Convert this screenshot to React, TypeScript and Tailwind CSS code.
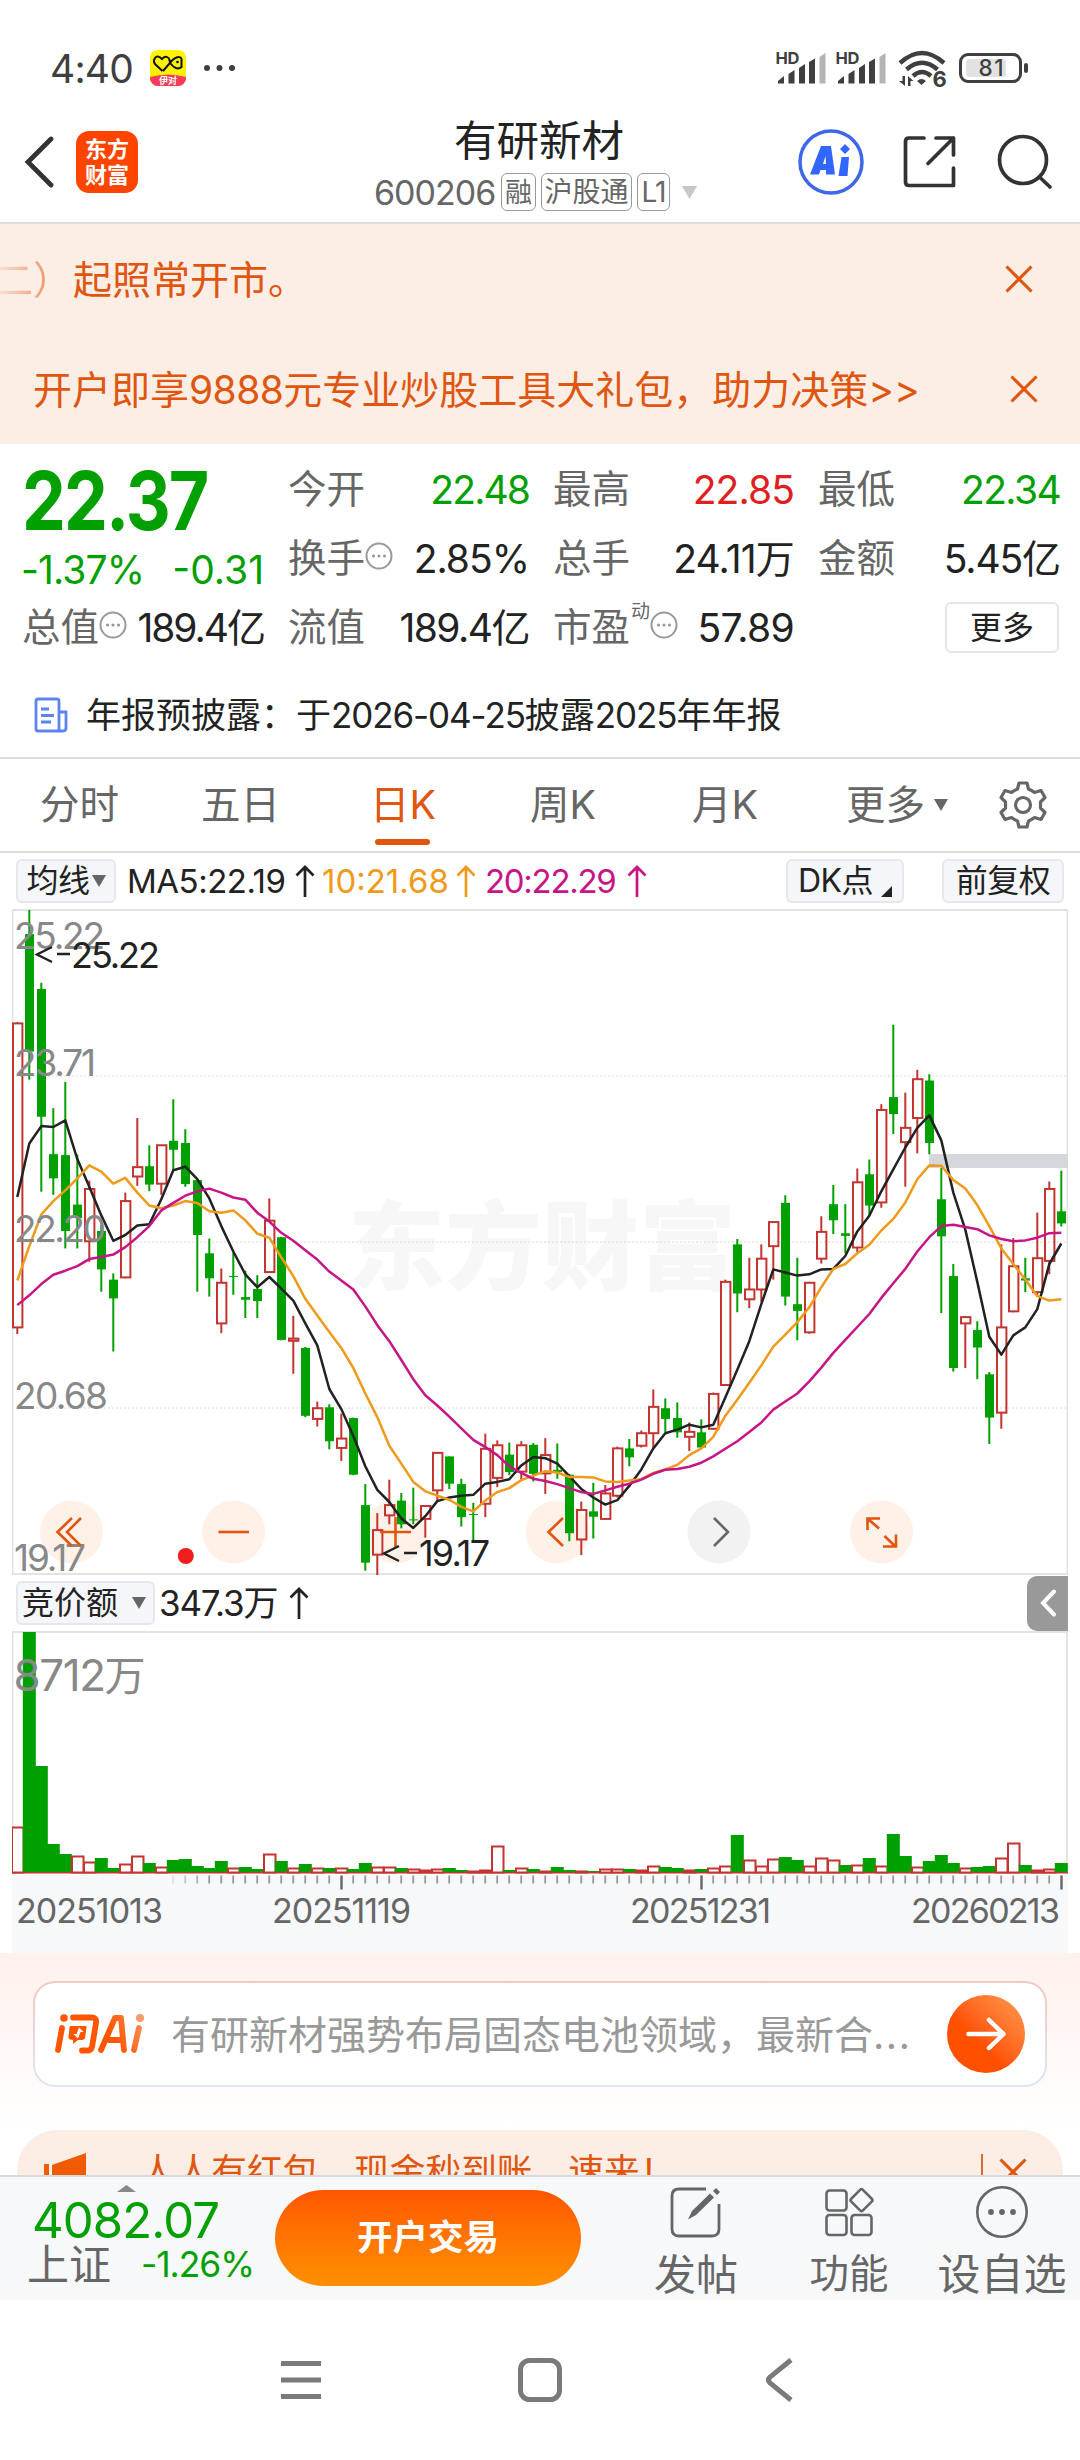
import React from 'react';

const RED = '#c23531';
const GREEN = '#00a000';

type Candle = [dir: 'r' | 'g', high: number, top: number, bottom: number, low: number];

// Price levels are stored on a 22 (25.22) to 1510 (19.17) scale.
const candles: Candle[] = [
  ['r', 273, 276, 957, 972], ['g', 22, 76, 339, 402], ['g', 185, 199, 485, 653], ['g', 466, 569, 623, 660],
  ['g', 407, 571, 741, 780], ['g', 570, 682, 712, 780], ['r', 628, 647, 764, 810], ['g', 728, 741, 827, 877],
  ['g', 836, 850, 892, 1011], ['r', 655, 674, 845, 847], ['r', 488, 598, 619, 640], ['g', 549, 596, 637, 652],
  ['r', 548, 549, 635, 660], ['g', 446, 539, 559, 605], ['g', 513, 544, 636, 642], ['g', 625, 627, 750, 877],
  ['g', 758, 791, 847, 888], ['r', 825, 857, 948, 970], ['g', 790, 842, 844, 884], ['g', 830, 889, 895, 936],
  ['g', 840, 871, 898, 936], ['r', 668, 718, 833, 835], ['g', 754, 755, 985, 986], ['r', 931, 982, 987, 1061],
  ['g', 1001, 1003, 1155, 1158], ['r', 1123, 1138, 1162, 1179], ['g', 1129, 1136, 1212, 1230], ['r', 1150, 1206, 1227, 1256],
  ['g', 1159, 1160, 1287, 1288], ['g', 1308, 1355, 1484, 1502], ['r', 1373, 1411, 1466, 1512], ['r', 1298, 1355, 1378, 1398],
  ['g', 1328, 1345, 1398, 1407], ['g', 1316, 1387, 1389, 1398], ['r', 1356, 1357, 1386, 1428], ['r', 1237, 1238, 1322, 1345],
  ['g', 1246, 1246, 1307, 1319], ['g', 1296, 1308, 1382, 1403], ['g', 1350, 1375, 1377, 1437], ['r', 1195, 1229, 1352, 1382],
  ['r', 1210, 1221, 1294, 1315], ['g', 1215, 1242, 1281, 1288], ['r', 1212, 1221, 1280, 1300], ['g', 1216, 1220, 1285, 1302],
  ['r', 1205, 1243, 1284, 1330], ['g', 1217, 1276, 1281, 1296], ['g', 1285, 1287, 1418, 1436], ['r', 1347, 1366, 1432, 1467],
  ['g', 1305, 1369, 1381, 1430], ['r', 1310, 1329, 1386, 1388], ['r', 1224, 1228, 1334, 1338], ['g', 1207, 1228, 1248, 1268],
  ['r', 1188, 1194, 1222, 1226], ['r', 1096, 1135, 1194, 1229], ['g', 1116, 1138, 1162, 1192], ['g', 1125, 1160, 1192, 1204],
  ['r', 1170, 1191, 1202, 1234], ['g', 1163, 1192, 1226, 1230], ['r', 1103, 1106, 1184, 1186], ['r', 850, 855, 1086, 1088],
  ['g', 759, 771, 881, 923], ['r', 801, 872, 894, 914], ['r', 771, 803, 872, 900], ['r', 719, 721, 775, 850],
  ['g', 661, 678, 888, 908], ['g', 801, 905, 920, 986], ['r', 855, 857, 968, 971], ['r', 708, 743, 803, 814],
  ['g', 638, 681, 717, 748], ['g', 681, 746, 752, 791], ['r', 601, 632, 778, 788], ['g', 581, 614, 684, 708],
  ['r', 457, 470, 677, 689], ['g', 279, 441, 479, 524], ['r', 431, 510, 542, 642], ['r', 380, 401, 488, 567],
  ['g', 390, 404, 544, 569], ['g', 600, 670, 753, 925], ['g', 815, 842, 1048, 1056], ['r', 932, 934, 948, 1048],
  ['g', 943, 963, 1002, 1073], ['g', 1057, 1062, 1159, 1218], ['r', 771, 957, 1148, 1184], ['r', 757, 820, 921, 923],
  ['g', 801, 847, 852, 878], ['r', 700, 802, 878, 885], ['r', 630, 647, 808, 838], ['g', 606, 697, 724, 731],
];

const ma5 = [
  665, 545, 506, 508, 493, 580, 642, 706, 763, 750, 729, 726, 670, 605, 597, 625, 668, 730, 787, 838, 867, 844, 870, 897,
  948, 997, 1095, 1140, 1200, 1268, 1321, 1348, 1385, 1406, 1380, 1346, 1338, 1334, 1332, 1307, 1303, 1297, 1266, 1247,
  1250, 1262, 1290, 1319, 1338, 1354, 1344, 1312, 1275, 1228, 1194, 1186, 1175, 1181, 1175, 1114, 1052, 988, 905, 827,
  834, 841, 838, 827, 826, 797, 742, 707, 652, 603, 554, 510, 482, 538, 655, 738, 855, 978, 1018, 975, 957, 916, 815, 769,
];
const ma10 = [
  852, 775, 704, 674, 650, 623, 594, 608, 635, 622, 655, 684, 690, 684, 674, 678, 697, 700, 695, 717, 747, 756, 800, 842,
  893, 930, 967, 1003, 1048, 1105, 1158, 1222, 1262, 1303, 1324, 1334, 1343, 1359, 1369, 1345, 1326, 1317, 1299, 1289,
  1279, 1282, 1292, 1292, 1293, 1302, 1303, 1300, 1297, 1283, 1275, 1265, 1243, 1228, 1202, 1155, 1119, 1081, 1042, 1000,
  973, 945, 912, 867, 826, 815, 791, 772, 740, 714, 677, 625, 594, 595, 627, 646, 683, 730, 780, 815, 850, 887, 897, 894,
];
const ma20 = [
  907, 885, 860, 839, 830, 820, 804, 799, 794, 777, 755, 730, 695, 678, 662, 652, 646, 655, 666, 671, 700, 720, 745, 763,
  784, 805, 832, 852, 872, 910, 952, 988, 1030, 1073, 1109, 1132, 1157, 1183, 1209, 1225, 1243, 1268, 1283, 1296, 1301,
  1308, 1317, 1326, 1330, 1322, 1314, 1307, 1298, 1285, 1276, 1274, 1269, 1260, 1246, 1229, 1212, 1191, 1170, 1141, 1123,
  1105, 1078, 1047, 1014, 985, 956, 927, 891, 858, 826, 787, 755, 730, 727, 732, 737, 751, 759, 764, 762, 756, 746, 745,
];

const volumes = [
  'r45', 'g241', 'g107', 'g29', 'g19', 'r16', 'r10', 'g15', 'g5', 'r8', 'r16', 'g10', 'r5', 'g13', 'g14', 'g7', 'g5', 'g12',
  'r4', 'g6', 'g4', 'r18', 'g12', 'r4', 'g9', 'r4', 'g5', 'r4', 'g4', 'g10', 'r5', 'r5', 'g5', 'r3', 'r2', 'r3', 'g5', 'g3',
  'r1', 'r2', 'r26', 'g3', 'r4', 'g4', 'r1', 'g6', 'g3', 'r1', 'g2', 'r3', 'r3', 'g4', 'r2', 'r6', 'g6', 'g5', 'r2', 'g4',
  'r4', 'r6', 'g38', 'r12', 'r6', 'r13', 'g16', 'g13', 'r6', 'r14', 'r12', 'g8', 'r7', 'g15', 'r6', 'g39', 'g17', 'r5',
  'g12', 'g18', 'g10', 'r4', 'g6', 'g7', 'r14', 'r29', 'g8', 'r2', 'r3', 'g10',
];

const cx = (i: number) => 17.3 + i * 12 - 12;
const py = (v: number) => (v - 22) / 2.24 + 1;
const line = (ma: number[]) => ma.map((v, i) => `${cx(i).toFixed(1)},${py(v).toFixed(1)}`).join(' ');

function PriceChart() {
  return (
    <svg className="block h-[666px] w-[1056px]" viewBox="0 0 1056 666">
      <text x="336" y="373" fontSize="97" fontWeight="900" fill="#f7f7f7" textLength="388" fontFamily="Noto Sans CJK SC">东方财富</text>
      {[167, 333, 499].map((y) => (
        <line key={y} x1="0" x2="1056" y1={y} y2={y} stroke="#dadada" strokeWidth="1" strokeDasharray="2 2" />
      ))}
      <rect x="0.5" y="1" width="1055" height="664" fill="none" stroke="#e3e3e5" strokeWidth="2" />
      {[59.6, 221.6, 383.5, 545, 707, 869.5].map((x, i) => (
        <circle key={x} cx={x} cy="623" r="31.5" fill={i === 4 ? '#f2f2f2' : '#fff0e8'} />
      ))}
      <rect x="917" y="245" width="139" height="14" fill="#d4d7dc" />
      {candles.map(([d, h, t, b, l], i) => {
        const x = cx(i);
        const top = py(t);
        const bot = py(b);
        return d === 'g' ? (
          <g key={i} fill={GREEN}>
            <rect x={x - 1} y={py(h)} width="2" height={Math.max(py(l) - py(h), 1)} />
            <rect x={x - 4.3} y={top} width="9" height={Math.max(bot - top, 1)} />
          </g>
        ) : (
          <g key={i} fill={RED}>
            <rect x={x - 1} y={py(h)} width="2" height={Math.max(top - py(h), 0)} />
            <rect x={x - 1} y={bot} width="2" height={Math.max(py(l) - bot, 0)} />
            <rect x={x - 4.3} y={top} width="9.4" height={Math.max(bot - top, 1)} fill="none" stroke={RED} strokeWidth="2" />
          </g>
        );
      })}
      <g fill="none" strokeWidth="2.5" strokeLinejoin="round">
        <polyline points={line(ma5)} stroke="#222" />
        <polyline points={line(ma10)} stroke="#ef9a1a" />
        <polyline points={line(ma20)} stroke="#c71585" />
      </g>
      <g fontFamily="Inter" fontSize="37" fill="#888">
        <text x="2" y="39.500" textLength="91">25.22</text>
        <text x="2" y="167" textLength="82">23.71</text>
        <text x="2" y="333" textLength="92">22.20</text>
        <text x="2" y="499.500" textLength="94">20.68</text>
        <text x="2" y="661.500" textLength="72">19.17</text>
      </g>
      <g fill="none" stroke="#e0560f" strokeWidth="2.6">
        <path d="M60 609 L45.500 623 L60 637 M69 609 L55 623 L69 637" />
        <path d="M206.500 623 H237" />
        <path d="M368 623 H399 M383.500 608 V638" />
        <path d="M551 609 L536.500 623 L551 637" />
        <path d="M867 619.500 L856 610 M855.500 621 V609.500 H868 M872.500 627 L883 637 M884 625.500 V637.500 H871" />
        <path d="M702 609 L716 623 L702 637" stroke="#666" />
      </g>
      <circle cx="173.800" cy="647" r="8" fill="#f01e1e" />
      <g fontFamily="Inter" fontSize="36" fill="#222">
        <path d="M40 38 L25 45.500 L40 53 M45 45 H58 M387 637 L372 644.500 L387 652 M392 644 H405" fill="none" stroke="#222" strokeWidth="2.400" />
        <text x="59" y="58.500" textLength="89">25.22</text>
        <text x="407" y="656.500" textLength="71">19.17</text>
      </g>
    </svg>
  );
}

function VolumeChart() {
  return (
    <svg className="block h-[322px] w-[1056px]" viewBox="0 0 1056 322">
      <rect x="0" y="244" width="1056" height="78" fill="#f7f8fa" />
      <path d="M0.500 243 V1 H1055 V243" fill="none" stroke="#e3e3e5" strokeWidth="2" />
      {volumes.map((v, i) => {
        const h = Number(v.slice(1));
        const x = cx(i);
        return v[0] === 'g' ? (
          <rect key={i} x={x - 6.5} y={242 - h} width="13" height={h} fill={GREEN} />
        ) : (
          <rect key={i} x={x - 5.3} y={241.500 - h} width="11.500" height={h} fill="#fff" stroke={RED} strokeWidth="2" />
        );
      })}
      <rect x="0" y="241" width="1056" height="1.500" fill={RED} />
      {volumes.map((_, i) =>
        i < 13 ? null : (
          <rect
            key={i}
            x={cx(i) - 1}
            y="244.500"
            width={i % 30 === 27 ? 2.4 : 1.8}
            height={i % 30 === 27 ? 14 : 8}
            fill={i % 30 === 27 ? '#666' : '#999'}
            opacity={Math.min(1, (i - 12) * 0.25)}
          />
        ),
      )}
      <text x="1.500" y="59.500" fontSize="44" fill="#888" textLength="132" fontFamily="Inter, 'Noto Sans CJK SC'">
        8712<tspan fontSize="41">万</tspan>
      </text>
      <g fontFamily="Inter" fontSize="34" fill="#666">
        <text x="4" y="292" textLength="147">20251013</text>
        <text x="260" y="292" textLength="139">20251119</text>
        <text x="618" y="292" textLength="141">20251231</text>
        <text x="899" y="292" textLength="149">20260213</text>
      </g>
    </svg>
  );
}

const Dots = ({ className = '' }: { className?: string }) => (
  <svg className={`size-[28px] shrink-0 ${className}`} viewBox="0 0 28 28">
    <circle cx="14" cy="14" r="12.500" fill="none" stroke="#999" strokeWidth="2" />
    <g fill="#999"><circle cx="8.500" cy="14" r="1.600" /><circle cx="14" cy="14" r="1.600" /><circle cx="19.500" cy="14" r="1.600" /></g>
  </svg>
);

const Close = ({ className = '' }: { className?: string }) => (
  <svg className={`size-[28px] shrink-0 ${className}`} viewBox="0 0 28 28">
    <path d="M1.500 1.500 L26.500 26.500 M26.500 1.500 L1.500 26.500" stroke="#e0560f" strokeWidth="3.100" />
  </svg>
);

const Up = ({ className = '' }: { className?: string }) => (
  <svg className={`h-[32px] w-[20px] shrink-0 ${className}`} viewBox="0 0 20 32">
    <path d="M10 32 V2 M1.500 10.500 L10 2 L18.500 10.500" fill="none" stroke="currentColor" strokeWidth="2.700" />
  </svg>
);

const Down = ({ className = '' }: { className?: string }) => (
  <svg className={`h-[12px] w-[14px] shrink-0 ${className}`} viewBox="0 0 14 12"><path d="M0 0 H14 L7 12 Z" fill="currentColor" /></svg>
);

function Signal() {
  return (
    <svg className="h-[36px] w-[50px] shrink-0" viewBox="0 -4 50 36" fill="#3f3f3f">
      <text x="-0.500" y="12" fontSize="16.500" fontWeight="700" fontFamily="Inter" textLength="24">HD</text>
      <path d="M2 29 L8 24 V31.500 H2 Z M12.500 22 L18.500 18 V31.500 H12.500 Z M23 16 L29 12 V31.500 H23 Z M33 10 L39 6.500 V31.500 H33 Z" />
      <path d="M43.500 5 L49.500 1 V31.500 H43.500 Z" fill="#b4b4b4" />
    </svg>
  );
}

function StatusBar() {
  return (
    <div className="flex h-[136px] items-start pt-[48px] pl-[50px] text-[#3f3f3f]">
      <span className="mt-[1px] w-[81px] shrink-0 text-[39px] leading-[40px] tracking-[-0.8px] whitespace-nowrap">4:40</span>
      <svg className="mt-[2px] ml-[19px] size-[36px] shrink-0" viewBox="0 0 36 36">
        <defs><clipPath id="app"><rect width="36" height="36" rx="8" /></clipPath></defs>
        <g clipPath="url(#app)">
          <rect width="36" height="36" fill="#fff200" />
          <path d="M0 27 Q18 22 36 27 V36 H0 Z" fill="#f93a5c" />
        </g>
        <path d="M12.500 21 L5 14 C2 10 6 5 9.500 7 L12 9 C15 5 19 7 19.500 10 L20 13 L13 21 M20 13 C25 6 31 6 31.500 9 V17 C28 20 24 18 20 13" fill="none" stroke="#111" strokeWidth="2" />
        <circle cx="27.500" cy="12" r="1.300" />
        <text x="9" y="33.500" fontSize="9" fontWeight="700" fill="#fff" fontFamily="Noto Sans CJK SC">伊对</text>
      </svg>
      <svg className="mt-[17px] ml-[17px] h-[6px] w-[34px] shrink-0" viewBox="0 0 34 6" fill="#3f3f3f">
        <circle cx="4" cy="3" r="3" /><circle cx="16.500" cy="3" r="3" /><circle cx="29" cy="3" r="3" />
      </svg>
      <div className="ml-[539px] flex shrink-0 gap-[10px]">
        <Signal />
        <Signal />
      </div>
      <svg className="mt-[2px] ml-[12px] h-[40px] w-[50px] shrink-0" viewBox="0 0 50 40">
        <g fill="none" stroke="#3f3f3f" strokeWidth="4.400">
          <path d="M2 13 Q24 -7 46 13" /><path d="M8.500 19.500 Q24 6 39.500 19.500" /><path d="M15 26 Q24 18 33 26" />
        </g>
        <path d="M19 31 Q23.500 27 28 31 L23.500 35 Z M4.500 26 h2.500 v10 l-6 -5 h3.500 Z M10 36 h2.500 v-5 h3 l-5.500 -5 Z" fill="#3f3f3f" />
        <text x="34.500" y="37" fontSize="22" fontWeight="700" fill="#3f3f3f" fontFamily="Inter" textLength="13">6</text>
      </svg>
      <svg className="mt-[5px] ml-[11px] h-[30px] w-[70px] shrink-0" viewBox="0 0 70 30">
        <rect x="7" y="6" width="40" height="18" rx="3" fill="#e2e2e2" />
        <rect x="1.500" y="1.500" width="60" height="27" rx="7.500" fill="none" stroke="#3f3f3f" strokeWidth="3" />
        <rect x="65" y="10" width="4" height="10" rx="2" fill="#3f3f3f" />
        <text x="19.500" y="23" fontSize="22.500" fontWeight="500" fill="#3f3f3f" fontFamily="Inter" textLength="25">81</text>
      </svg>
    </div>
  );
}

function Header() {
  return (
    <header className="flex h-[88px] items-start border-b-2 border-[#dcdcdc]">
      <svg className="mt-0 ml-[24px] h-[52px] w-[32px] shrink-0" viewBox="0 0 32 52">
        <path d="M27 3 L4 26 L27 49" fill="none" stroke="#333" strokeWidth="4.800" strokeLinecap="round" />
      </svg>
      <div className="-mt-[5px] ml-[20px] flex size-[62px] shrink-0 flex-col items-center justify-center rounded-[13px] bg-[#ff4400] text-[22px] leading-[26px] font-bold text-white">
        <span>东方</span><span>财富</span>
      </div>
      <div className="-mt-[21px] ml-[236px] w-[331px] shrink-0">
        <div className="ml-[80px] text-[42.5px] leading-[52px] text-[#222]">有研新材</div>
        <div className="mt-[6px] flex h-[38px] items-center text-[#666]">
          <span className="w-[127px] text-[34px] tracking-[-1px]">600206</span>
          <span className="flex h-[38px] w-[35px] items-center justify-center rounded-[6px] border-[1.5px] border-[#999] text-[27px] leading-none">融</span>
          <span className="ml-[5px] flex h-[38px] w-[91px] items-center justify-center rounded-[6px] border-[1.5px] border-[#999] text-[28px] leading-none whitespace-nowrap">沪股通</span>
          <span className="ml-[5px] flex h-[38px] w-[33px] items-center justify-center rounded-[6px] border-[1.5px] border-[#999] text-[28px] leading-none tracking-[-1px]">L1</span>
          <Down className="ml-[9px] h-[13px] w-[21px] text-[#c8c8c8]" />
        </div>
      </div>
      <svg className="-mt-[7px] ml-[93px] size-[66px] shrink-0" viewBox="0 0 66 66">
        <circle cx="33" cy="33" r="31" fill="none" stroke="#3f68e8" strokeWidth="3.500" />
        <path d="M23 17 H33 L37 45.500 H28 V41 H22.500 L21 45.500 H12 Z M25 35 H28 L27.500 27 Z" fill="#3366ff" fillRule="evenodd" />
        <path d="M43.500 28 H51 L49.500 47 H40.500 Z M47 15 L52 20 L47 25 L42 20 Z" fill="#3366ff" />
      </svg>
      <svg className="-mt-[1px] ml-[39px] size-[54px] shrink-0" viewBox="0 0 54 54" fill="none" stroke="#333" strokeWidth="3.700" strokeLinecap="round" strokeLinejoin="round">
        <path d="M21 3 H6 Q2.500 3 2.500 6.500 V47 Q2.500 50.500 6 50.500 H50.500 V33 M33 3 H50.500 V20 M50.500 3 L25 28.500" />
      </svg>
      <svg className="-mt-[2px] ml-[39px] size-[58px] shrink-0" viewBox="0 0 58 58" fill="none" stroke="#333" strokeWidth="3.700" strokeLinecap="round">
        <circle cx="27" cy="26" r="23.500" /><path d="M43.500 43 L54 53" />
      </svg>
    </header>
  );
}

const Stat = ({ label, value, color = 'text-[#222]', icon, sup, track = 'tracking-[-1px]' }: { label: string; value: string; color?: string; icon?: boolean; sup?: string; track?: string }) => (
  <div className="flex h-[50px] items-center justify-between whitespace-nowrap">
    <span className="flex items-center text-[38.5px] leading-none text-[#666]">
      {label}
      {sup && <span className="-mt-[32px] ml-[1px] text-[19px]">{sup}</span>}
      {icon && <Dots className="-mt-1" />}
    </span>
    <span className={`-mr-px text-[39px] leading-none ${color} ${track}`}>{value}</span>
  </div>
);

function Quote() {
  return (
    <section className="h-[313px] shrink-0 pt-[20px] text-[#222]">
      <div className="grid h-[188px] grid-cols-[241px_240px_240px_241px] gap-x-[25px] pl-[22px]">
        <div>
          <div className="h-[74px] w-[200px] origin-left scale-x-[0.86] text-[81px] leading-[74px] font-bold tracking-[-2.2px] text-[#00a000]">22.37</div>
          <div className="mt-[8px] flex h-[46px] w-[242px] items-center justify-between text-[39px] leading-none text-[#00a000]">
            <span className="-ml-px tracking-[-0.9px]">-1.37%</span><span>-0.31</span>
          </div>
          <div className="mt-[10px]"><Stat label="总值" icon value="189.4亿" track="tracking-[-2px]" /></div>
        </div>
        <div className="flex flex-col gap-[19px]">
          <Stat label="今开" value="22.48" color="text-[#00a000]" track="tracking-[-1.9px]" />
          <Stat label="换手" icon value="2.85%" track="tracking-[-1px]" />
          <Stat label="流值" value="189.4亿" track="tracking-[-1.5px]" />
        </div>
        <div className="flex flex-col gap-[19px]">
          <Stat label="最高" value="22.85" color="text-[#e02020]" track="tracking-[-0.9px]" />
          <Stat label="总手" value="24.11万" track="tracking-[-0.8px]" />
          <Stat label="市盈" sup="动" icon value="57.89" track="tracking-[-0.6px]" />
        </div>
        <div className="flex flex-col gap-[19px]">
          <Stat label="最低" value="22.34" color="text-[#00a000]" track="tracking-[-1.6px]" />
          <Stat label="金额" value="5.45亿" track="tracking-[-1.1px]" />
          <button className="flex h-[51px] w-[114px] items-center justify-center self-end rounded-[6px] border-2 border-[#e6e6e8] text-[32px] leading-none">更多</button>
        </div>
      </div>
      <div className="mt-[36px] flex h-[54px] items-center pl-[34px]">
        <svg className="h-[36px] w-[34px] shrink-0" viewBox="0 0 34 36" fill="none" stroke="#5b84f0" strokeWidth="2.800">
          <path d="M25 34 V4 Q25 2 23 2 H4 Q2 2 2 4 V32 Q2 34 4 34 H29 Q32 34 32 31 V15 H25 M7 12 H15 M7 18.500 H20 M7 25 H17" />
        </svg>
        <span className="ml-[18px] text-[35px] leading-none whitespace-nowrap">
          年报预披露：于<span className="tracking-[-1.1px]">2026-04-25</span>披露<span className="tracking-[-1.1px]">2025</span>年年报
        </span>
      </div>
    </section>
  );
}

function Tabs() {
  return (
    <nav className="flex h-[96px] shrink-0 items-center border-y-2 border-[#dcdcdc] text-[39.5px] leading-none whitespace-nowrap text-[#666]">
      <span className="mt-[2px] ml-[40px] w-[161px]">分时</span>
      <span className="mt-[2px] w-[169px]">五日</span>
      <span className="relative mt-[2px] w-[160px] text-[#e0560f]">
        日K<i className="absolute top-[53px] left-[5px] h-[6px] w-[55px] rounded-full bg-[#e0560f]" />
      </span>
      <span className="mt-[2px] w-[162px]">周K</span>
      <span className="mt-[2px] w-[154px]">月K</span>
      <span className="mt-[2px] w-[88px]">更多</span>
      <Down />
      <svg className="ml-[50px] size-[50px]" viewBox="0 0 50 50" fill="none" stroke="#666" strokeWidth="3.200" strokeLinejoin="round">
        <path d="M21 3 H29 L30.500 9 Q34 10.500 36.500 12.500 L43 10.500 L47 17.500 L42.500 22 V28 L47 32.500 L43 39.500 L36.500 37.500 Q34 39.500 30.500 41 L29 47 H21 L19.500 41 Q16 39.500 13.500 37.500 L7 39.500 L3 32.500 L7.500 28 V22 L3 17.500 L7 10.500 L13.500 12.500 Q16 10.500 19.500 9 Z" />
        <circle cx="25" cy="25" r="7.500" />
      </svg>
    </nav>
  );
}

function Indicators() {
  return (
    <div className="flex h-[56px] shrink-0 items-center pl-[16px] text-[33px] leading-none tracking-[-0.5px] whitespace-nowrap text-[#222]">
      <span className="flex h-[44px] w-[100px] items-center justify-center gap-[2px] rounded-[6px] border-2 border-[#e6e7ea] bg-[#f5f6f9] text-[32px]">
        均线<Down className="text-[#666]" />
      </span>
      <span className="ml-[11px] w-[168px]">MA5:22.19</span><Up />
      <span className="ml-[7px] w-[134px] tracking-[0px] text-[#ef9a1a]">10:21.68</span><Up className="text-[#ef9a1a]" />
      <span className="ml-[9px] w-[142px] tracking-[-1.3px] text-[#c71585]">20:22.29</span><Up className="text-[#c71585]" />
      <span className="ml-[139px] flex h-[44px] w-[118px] items-center rounded-[6px] border-2 border-[#e6e7ea] bg-[#f5f6f9] pl-[10px] text-[32px]">
        DK点
        <svg className="mt-[20px] ml-[8px] size-[11px]" viewBox="0 0 11 11"><path d="M11 0 V11 H0 Z" fill="#222" /></svg>
      </span>
      <span className="ml-[38px] flex h-[44px] w-[122px] items-center justify-center rounded-[6px] border-2 border-[#e6e7ea] bg-[#f5f6f9] text-[32px]">前复权</span>
    </div>
  );
}

function Assistant() {
  return (
    <section className="h-[177px] shrink-0 bg-linear-to-b from-[#fff1ec] to-white px-[33px] pt-[28px]">
      <div className="rounded-[22px] bg-linear-to-b from-[#f3c9c0] to-[#dde4f3] p-[2px]">
        <div className="flex h-[102px] items-center rounded-[20px] bg-white pl-[19px]">
          <svg className="h-[42px] w-[92px] shrink-0" viewBox="0 0 92 42">
            <defs>
              <linearGradient id="wen" x1="0" x2="92" y1="42" y2="0" gradientUnits="userSpaceOnUse">
                <stop offset="0.600" stopColor="#ff5500" /><stop offset="1" stopColor="#ff9a6a" />
              </linearGradient>
            </defs>
            <g fill="none" stroke="url(#wen)" strokeWidth="5.800" strokeLinecap="round" strokeLinejoin="round">
              <path d="M8 15 L4 37 M19 4.500 H38 Q43 4.500 42 10 L38 34 Q37 38 32 37.500 H28" />
              <path d="M47 37 L61 5 H67 L70 37 M55 27 H68" />
              <path d="M85 15 L80 37" />
            </g>
            <circle cx="10" cy="5" r="3.800" fill="#ff5500" /><circle cx="86" cy="5" r="4" fill="#ff9a6a" />
            <path d="M16 13 H31 Q33 13 32.500 15 L31 25 Q30.500 27 28 27 H24 L19 31 V27 Q14 27 14.500 24 L15.500 14 Z" fill="#ff5500" />
            <path d="M25 14.500 L29.500 19 H26.500 L24 25.500 L19.500 21 H22.500 Z" fill="#fff" />
          </svg>
          <span className="ml-[25px] w-[746px] text-[39px] leading-none whitespace-nowrap text-[#999]">
            有研新材强势布局固态电池领域，最新合<span className="tracking-[1.6px]">...</span>
          </span>
          <span className="ml-[30px] flex size-[78px] shrink-0 items-center justify-center rounded-full bg-linear-to-tr from-[#ff5000] from-40% to-[#ff9a4a]">
            <svg className="h-[34px] w-[40px]" viewBox="0 0 40 34" fill="none" stroke="#fff" strokeWidth="4.500" strokeLinecap="round" strokeLinejoin="round">
              <path d="M2.500 17 H37 M23 3 L37.500 17 L23 31" />
            </svg>
          </span>
        </div>
      </div>
    </section>
  );
}

function Promo() {
  return (
    <div className="h-[45px] shrink-0 overflow-hidden">
      <div className="mx-[17px] flex h-[84px] items-center rounded-[40px] bg-[#fceee5] text-[#e0560f]">
        <svg className="ml-[27px] h-[38px] w-[44px] shrink-0" viewBox="0 0 44 38" fill="#f05a00">
          <path d="M0 11 H5 V27 H0 Z M8 12 L42 0 V38 L8 26 Z" />
        </svg>
        <span className="ml-[52px] w-[841px] text-[35.7px] leading-none whitespace-nowrap">
          人人有红包，现金秒到账，速来<span className="pl-[4px]">!</span>
        </span>
        <i className="h-[36px] w-[1.5px] bg-[#d0702f]" />
        <Close className="ml-[16px]" />
      </div>
    </div>
  );
}

function BottomBar() {
  return (
    <footer className="flex h-[125px] shrink-0 border-t-2 border-[#d9dadd] bg-[#f7f8fa] whitespace-nowrap text-[#666]">
      <div className="w-[275px] shrink-0 pt-[8px]">
        <svg className="ml-[117px] block h-[7px] w-[19px]" viewBox="0 0 19 7"><path d="M0 7 L9.500 0 L19 7 Z" fill="#888" /></svg>
        <div className="mt-[4px] ml-[32px] h-[50px] text-[49px] leading-[50px] tracking-[-0.9px] text-[#00a000]">4082.07</div>
        <div className="flex items-center pl-[27px] leading-[38px]">
          <span className="w-[114px] text-[42px]">上证</span>
          <span className="text-[35.5px] tracking-[-1.1px] text-[#00a000]">-1.26%</span>
        </div>
      </div>
      <button className="mt-[13px] h-[96px] w-[306px] shrink-0 rounded-full bg-linear-to-b from-[#ff5500] to-[#ff9000] text-[35.5px] font-bold text-white">开户交易</button>
      <div className="ml-[50px] flex w-[130px] shrink-0 flex-col items-center pt-[9px]">
        <svg className="size-[52px]" viewBox="0 0 52 52" fill="none" stroke="#666" strokeWidth="2.800">
          <path d="M36 3 H9 Q2 3 2 10 V43 Q2 50 9 50 H42 Q49 50 49 43 V18" />
          <path d="M18 33.500 L22 25 L40 7.500 L44 11.500 L26 29 Z M43 5 L46 2 L50 6 L47 9 Z" fill="#666" stroke="none" />
        </svg>
        <span className="mt-[16px] text-[42px] leading-[42px]">发帖</span>
      </div>
      <div className="ml-[28px] flex w-[120px] shrink-0 flex-col items-center pt-[9px]">
        <svg className="size-[52px]" viewBox="0 0 52 52" fill="none" stroke="#666" strokeWidth="2.600">
          <rect x="3.500" y="4.500" width="20" height="20" rx="3" />
          <rect x="3.500" y="29" width="20" height="20" rx="3" />
          <rect x="28.500" y="29" width="20" height="20" rx="3" />
          <rect x="30" y="6" width="16.500" height="16.500" rx="2" transform="rotate(45 38.500 14.500)" />
        </svg>
        <span className="mt-[16px] text-[39.500px] leading-[40px]">功能</span>
      </div>
      <div className="ml-[23px] flex w-[140px] shrink-0 flex-col items-center pt-[9px]">
        <svg className="size-[52px]" viewBox="0 0 52 52" fill="#666">
          <circle cx="26" cy="26" r="24.700" fill="none" stroke="#666" strokeWidth="2.600" />
          <circle cx="15" cy="26" r="2.900" /><circle cx="26" cy="26" r="2.900" /><circle cx="37" cy="26" r="2.900" />
        </svg>
        <span className="mt-[15px] text-[43px] leading-[42px]">设自选</span>
      </div>
    </footer>
  );
}

export default function App() {
  return (
    <div className="flex h-[2460px] w-[1080px] flex-col overflow-hidden bg-white font-['Inter','Noto_Sans_CJK_SC',sans-serif] text-[#222]">
      <StatusBar />
      <Header />
      <section className="h-[220px] shrink-0 bg-[#fceee5] text-[39px] leading-none whitespace-nowrap text-[#e0560f]">
        <div className="flex h-[110px] items-center">
          <span className="flex w-[73px]">
            <span className="-ml-[6px] bg-linear-to-r from-[#e0560f]/5 to-[#e0560f]/80 bg-clip-text text-transparent">二）</span>
          </span>
          <span className="w-[932px]">起照常开市。</span>
          <Close />
        </div>
        <div className="flex h-[110px] items-center pl-[33px]">
          <span className="w-[977px]">
            开户即享<span className="tracking-[-0.6px]">9888</span>元专业炒股工具大礼包，助力决策&gt;&gt;
          </span>
          <Close />
        </div>
      </section>
      <Quote />
      <Tabs />
      <Indicators />
      <div className="shrink-0 pl-[12px]"><PriceChart /></div>
      <div className="flex h-[56px] shrink-0 items-center pr-[12px] pl-[16px] leading-none">
        <span className="flex h-[44px] w-[139px] items-center rounded-[6px] border-2 border-[#e6e7ea] bg-[#f5f6f9] pl-[4px] text-[32px] whitespace-nowrap">
          竞价额<Down className="ml-[14px] text-[#666]" />
        </span>
        <span className="ml-[4px] w-[130px] text-[35px] tracking-[-1.2px] whitespace-nowrap">347.3万</span>
        <Up className="w-[18px]" />
        <span className="ml-auto flex h-[55px] w-[41px] items-center justify-center rounded-l-[10px] bg-[#999]">
          <svg className="h-[28px] w-[16px]" viewBox="0 0 16 28"><path d="M14 2.500 L3 14 L14 25.500" fill="none" stroke="#fff" strokeWidth="4" strokeLinecap="round" /></svg>
        </span>
      </div>
      <div className="shrink-0 pl-[12px]"><VolumeChart /></div>
      <Assistant />
      <Promo />
      <BottomBar />
      <div className="flex h-[160px] items-center pl-[280px]">
        <svg className="h-[44px] w-[42px]" viewBox="0 0 42 44" stroke="#7a7a7a" strokeWidth="5"><path d="M1 5.500 H41 M1 22 H41 M1 38.500 H41" /></svg>
        <svg className="ml-[195px] size-[46px]" viewBox="0 0 46 46"><rect x="3.500" y="3.500" width="39" height="39" rx="9" fill="none" stroke="#7a7a7a" strokeWidth="5" /></svg>
        <svg className="ml-[201px] h-[46px] w-[32px]" viewBox="0 0 32 46"><path d="M27 3 L6 20 Q3 23 6 26 L27 43" fill="none" stroke="#7a7a7a" strokeWidth="5" /></svg>
      </div>
    </div>
  );
}
